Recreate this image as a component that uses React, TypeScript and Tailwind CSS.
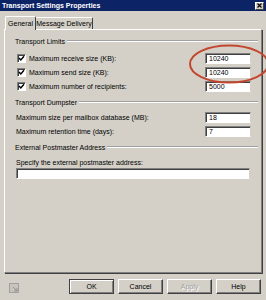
import React from "react";

const font = { fontFamily: '"Liberation Sans", Arial, sans-serif' };

function Check() {
  return (
    <div className="w-[9px] h-[9px] bg-white border border-t-[#808080] border-l-[#808080] border-r-white border-b-white shadow-[inset_1px_1px_0_#404040] flex items-center justify-center shrink-0">
      <svg width="7" height="7" viewBox="0 0 7 7">
        <path d="M1 3 L2.8 5 L6 1.2" stroke="#000" strokeWidth="1.4" fill="none" />
      </svg>
    </div>
  );
}

function Field({ value, w = "w-[46px]" }: { value: string; w?: string }) {
  return (
    <div
      className={`${w} h-[11px] bg-white border border-t-[#808080] border-l-[#808080] border-r-[#d4d0c8] border-b-white shadow-[inset_1px_1px_0_#404040] flex items-center pl-[3px] text-[7px] leading-none text-black shrink-0`}
    >
      {value}
    </div>
  );
}

function Header({ label }: { label: string }) {
  return (
    <div className="h-[10px] flex items-center gap-[2px] pr-[3px]">
      <span className="text-[7px] leading-none text-black whitespace-nowrap">{label}</span>
      <div className="flex-1 h-[2px] border-t border-t-[#a0a0a0] border-b border-b-white" />
    </div>
  );
}

function CheckRow({ label, value }: { label: string; value: string }) {
  return (
    <div className="h-[14px] flex items-center pl-[2px] pr-[10px]">
      <Check />
      <span className="ml-[3px] text-[7px] leading-none text-black whitespace-nowrap">{label}</span>
      <div className="ml-auto">
        <Field value={value} />
      </div>
    </div>
  );
}

function PlainRow({ label, value }: { label: string; value: string }) {
  return (
    <div className="h-[14px] flex items-center pl-[1px] pr-[10px]">
      <span className="text-[7px] leading-none text-black whitespace-nowrap">{label}</span>
      <div className="ml-auto">
        <Field value={value} />
      </div>
    </div>
  );
}

function Button({ label, disabled, def }: { label: string; disabled?: boolean; def?: boolean }) {
  return (
    <div
      className={`w-[45px] h-[15px] flex items-center justify-center text-[7px] leading-none border ${
        def ? "border-[#404040]" : "border-t-white border-l-white border-r-[#404040] border-b-[#404040]"
      } ${def ? "shadow-[inset_1px_1px_0_#fff,inset_-1px_-1px_0_#808080]" : "shadow-[inset_-1px_-1px_0_#808080]"} ${
        disabled ? "text-[#a0a0a0] [text-shadow:1px_1px_0_#fff]" : "text-black"
      }`}
    >
      {label}
    </div>
  );
}

export default function App() {
  return (
    <div className="w-[266px] h-[300px] bg-[#d4d0c8] relative overflow-hidden select-none" style={font}>
      {/* Title bar */}
      <div className="h-[11px] bg-[#0c2466] flex items-center pl-[2px] pr-[2px]">
        <span className="text-white font-bold text-[7px] leading-none whitespace-nowrap">
          Transport Settings Properties
        </span>
        <div className="ml-auto w-[9px] h-[8px] bg-[#d4d0c8] border border-t-white border-l-white border-r-[#404040] border-b-[#404040] flex items-center justify-center">
          <svg width="5" height="5" viewBox="0 0 5 5">
            <path d="M0.5 0.5 L4.5 4.5 M4.5 0.5 L0.5 4.5" stroke="#000" strokeWidth="1.2" />
          </svg>
        </div>
      </div>

      {/* Tabs */}
      <div className="h-[14px] mt-[4px] pl-[5px] flex items-end relative z-10">
        <div className="h-[14px] w-[31px] bg-[#d4d0c8] border-t border-l border-t-white border-l-white border-r border-r-[#404040] rounded-t-[2px] flex items-center justify-center text-[7px] leading-none text-black -mb-[1px] pb-[1px]">
          General
        </div>
        <div className="h-[12px] w-[57px] border-t border-t-white border-r border-r-[#404040] rounded-tr-[2px] flex items-center justify-center text-[7px] leading-none text-black">
          Message Delivery
        </div>
      </div>

      {/* Panel */}
      <div className="mx-[4px] h-[244px] border border-t-white border-l-white border-r-[#808080] border-b-[#808080] shadow-[1px_1px_0_#404040] flex flex-col pl-[10px] pt-[6px]">
        <Header label="Transport Limits" />
        <div className="mt-[5px]">
          <CheckRow label="Maximum receive size (KB):" value="10240" />
          <CheckRow label="Maximum send size (KB):" value="10240" />
          <CheckRow label="Maximum number of recipients:" value="5000" />
        </div>
        <div className="mt-[4px]">
          <Header label="Transport Dumpster" />
        </div>
        <div className="mt-[3px]">
          <PlainRow label="Maximum size per mailbox database (MB):" value="18" />
          <PlainRow label="Maximum retention time (days):" value="7" />
        </div>
        <div className="mt-[4px]">
          <Header label="External Postmaster Address" />
        </div>
        <div className="mt-[5px] h-[10px] flex items-center pl-[1px]">
          <span className="text-[7px] leading-none text-black whitespace-nowrap">
            Specify the external postmaster address:
          </span>
        </div>
        <div className="mt-[1px] pl-[1px]">
          <Field value="" w="w-[234px]" />
        </div>
      </div>

      {/* Bottom buttons */}
      <div className="mt-[6px] flex items-center pl-[9px] pr-[5px]">
        <div className="w-[10px] h-[10px] mt-[3px] border border-[#a0a0a0] bg-[#c8c4bc] relative">
          <svg width="8" height="8" viewBox="0 0 8 8" className="absolute left-0 top-0">
            <path d="M3 3 L7 7 M7 4 L7 7 L4 7" stroke="#909090" strokeWidth="1" fill="none" />
          </svg>
        </div>
        <div className="ml-auto flex gap-[4px]">
          <Button label="OK" def />
          <Button label="Cancel" />
          <Button label="Apply" disabled />
          <Button label="Help" />
        </div>
      </div>

      {/* Red annotation ellipse */}
      <svg className="absolute left-0 top-0 pointer-events-none" width="266" height="300" viewBox="0 0 266 300">
        <ellipse cx="229" cy="64" rx="39" ry="18.5" stroke="#c3472e" strokeWidth="2" fill="none" />
      </svg>
    </div>
  );
}
